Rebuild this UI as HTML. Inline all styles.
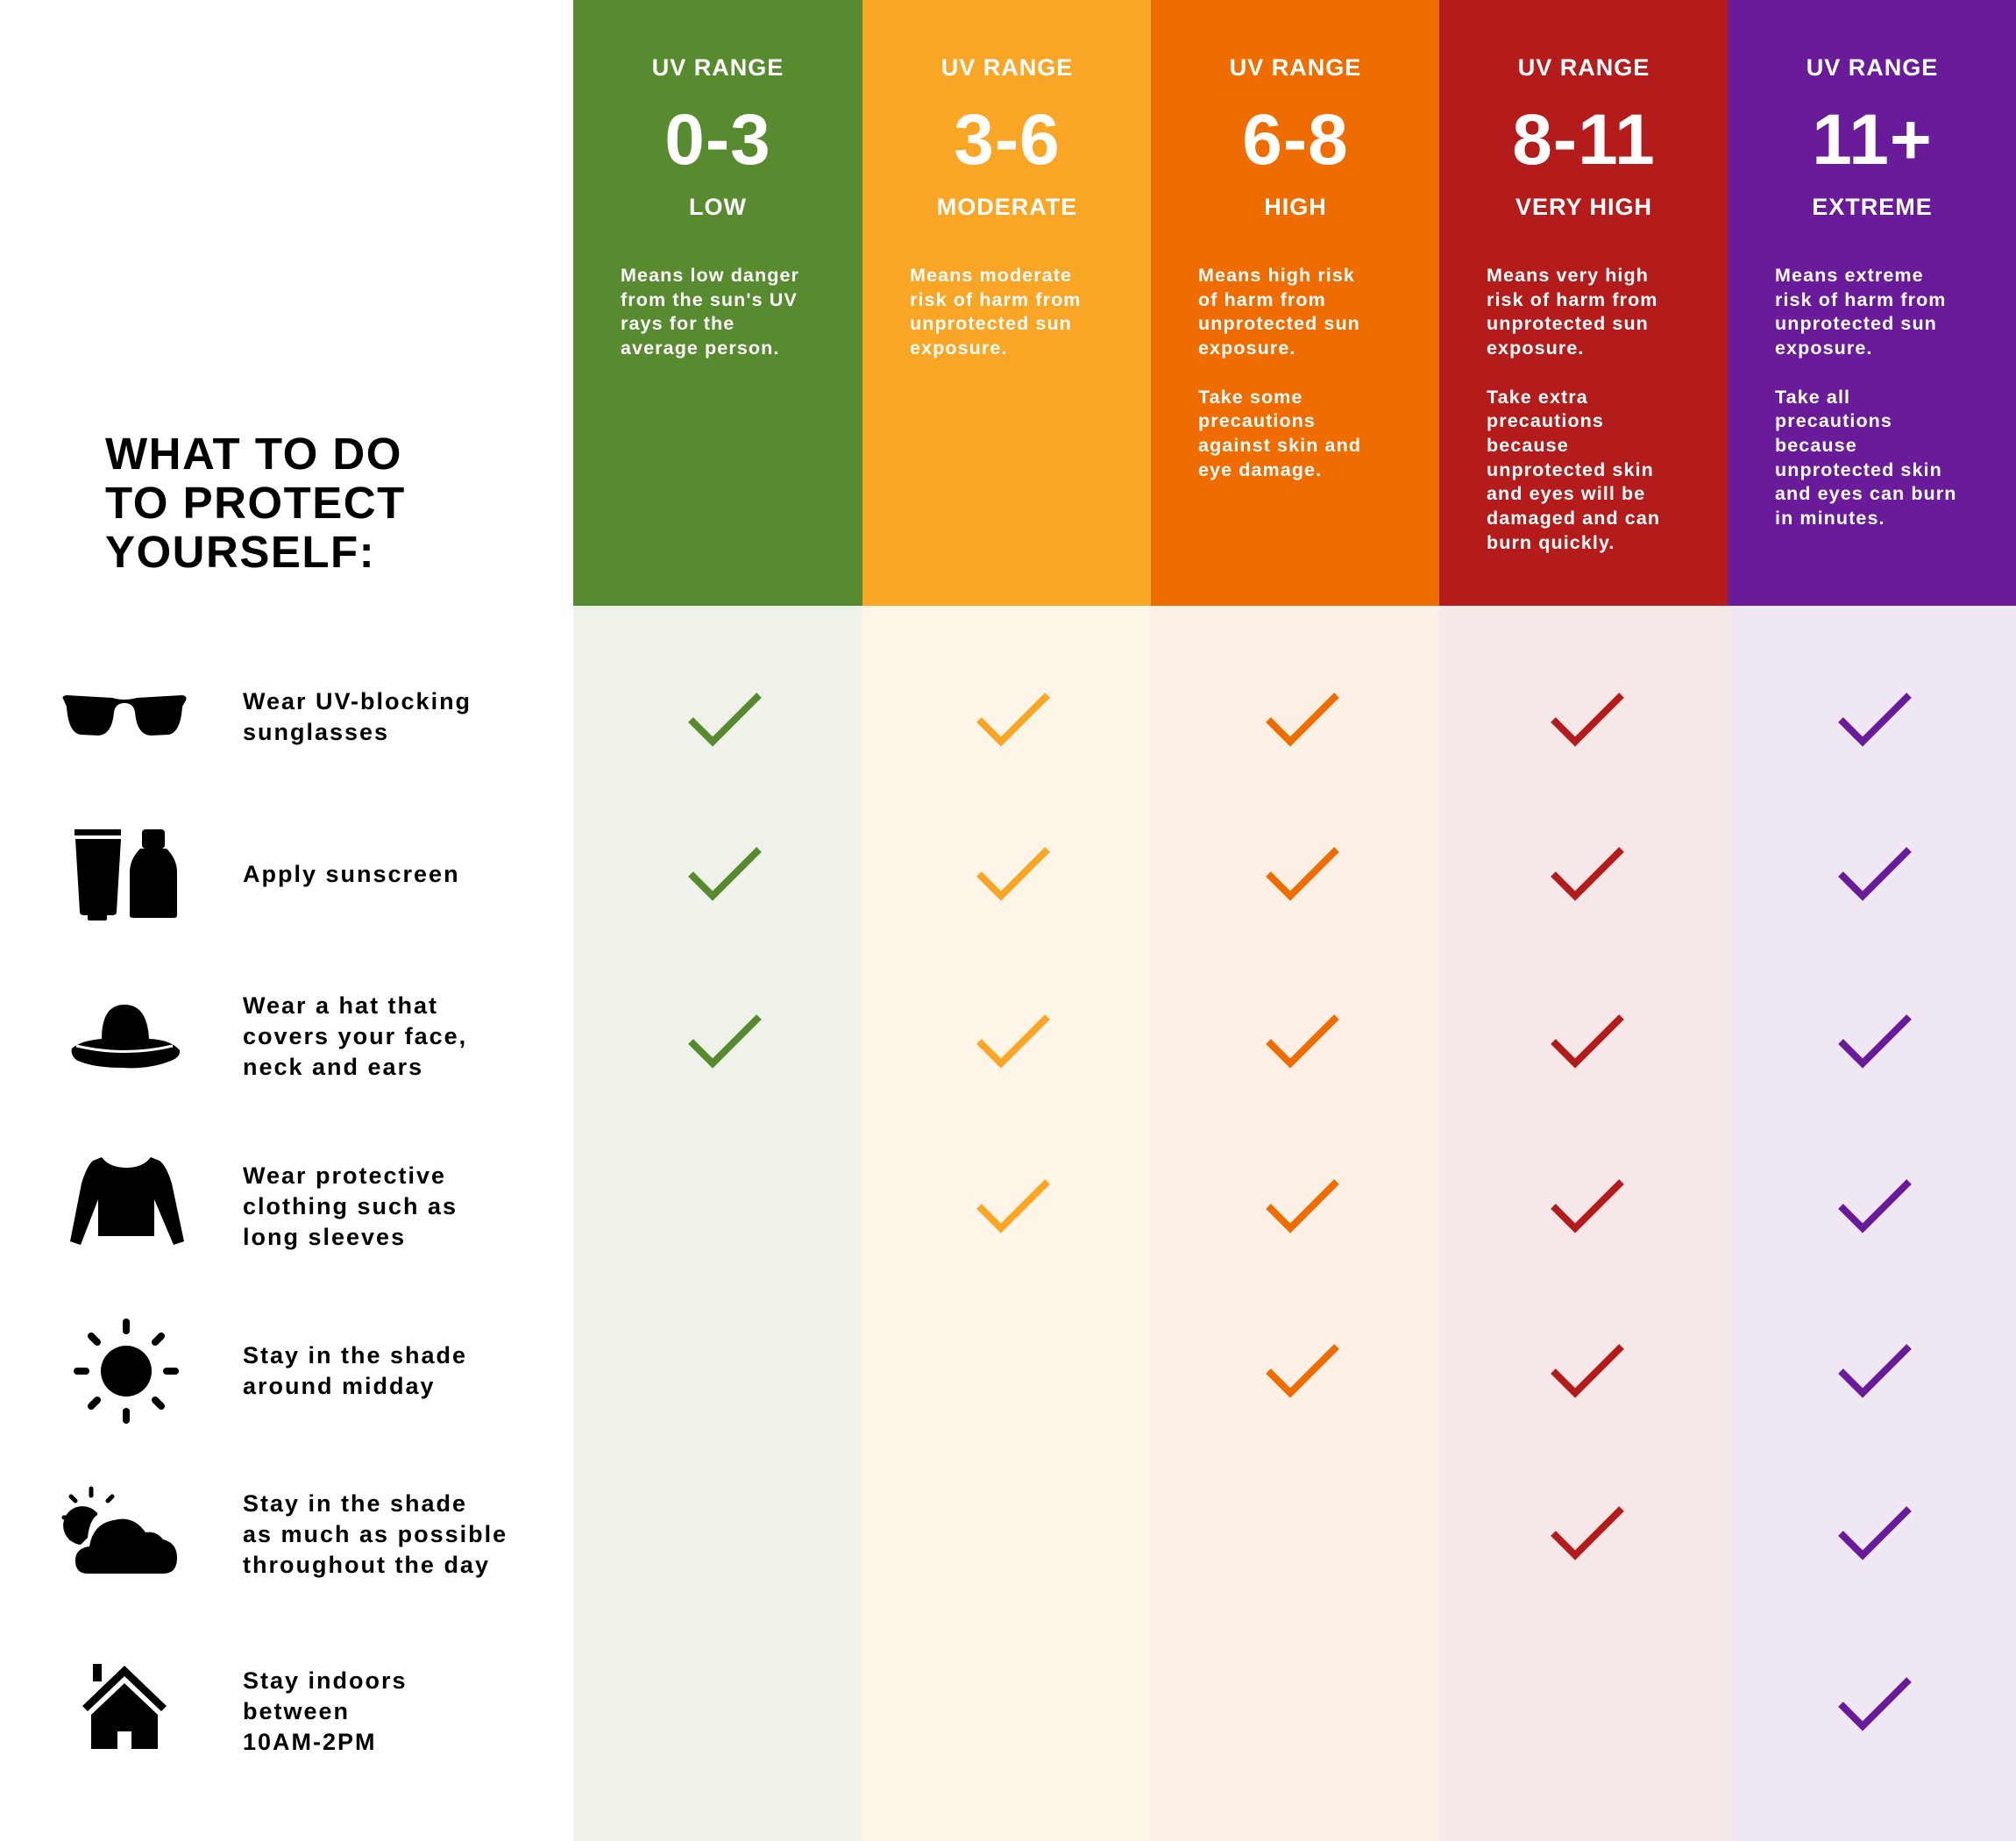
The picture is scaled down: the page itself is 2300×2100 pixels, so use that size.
<!DOCTYPE html>
<html><head><meta charset="utf-8"><style>
*{margin:0;padding:0;box-sizing:border-box}
body{width:2300px;height:2100px;position:relative;background:#fff;font-family:"Liberation Sans",Arial,sans-serif;font-weight:bold;overflow:hidden}
.col{position:absolute;top:0;width:330px;height:2100px}
.hd{position:absolute;left:0;top:0;width:100%;height:691px;color:#fff}
.uv{position:absolute;top:62px;width:100%;text-align:center;font-size:27px;letter-spacing:1px}
.num{position:absolute;top:115px;width:100%;text-align:center;font-size:82px;line-height:90px;letter-spacing:1px}
.lvl{position:absolute;top:221px;width:100%;text-align:center;font-size:27px;letter-spacing:1px}
.ds{position:absolute;top:301px;left:54px;white-space:nowrap;font-size:21.5px;line-height:27.7px;letter-spacing:1.1px}
.title{position:absolute;left:120px;top:490px;font-size:51px;line-height:56px;letter-spacing:1.5px;color:#000}
.lab{position:absolute;left:277px;font-size:27px;line-height:35px;letter-spacing:2px;color:#000}
</style></head><body>
<div class="title">WHAT TO DO<br>TO PROTECT<br>YOURSELF:</div>

<div class="lab" style="top:783px">Wear UV-blocking<br>sunglasses</div>
<div class="lab" style="top:980px">Apply sunscreen</div>
<div class="lab" style="top:1130px">Wear a hat that<br>covers your face,<br>neck and ears</div>
<div class="lab" style="top:1324px">Wear protective<br>clothing such as<br>long sleeves</div>
<div class="lab" style="top:1529px">Stay in the shade<br>around midday</div>
<div class="lab" style="top:1698px">Stay in the shade<br>as much as possible<br>throughout the day</div>
<div class="lab" style="top:1900px">Stay indoors<br>between<br>10AM-2PM</div>

<svg style="position:absolute;left:0;top:0" width="660" height="2100">
<g fill="#000">
<path d="M72 797 Q70 794 76 793 L128 796 Q142 800 156 796 L208 793 Q214 794 212 799 L208 806 Q206 836 192 838 L172 839 Q156 838 154 812 Q152 802 142 802 Q132 802 130 812 Q128 838 112 839 L92 838 Q78 836 76 806 Z"/>
<rect x="85" y="946" width="53" height="7"/>
<path d="M86 957 L138 957 L133 1040 Q133 1044 128 1044 L96 1044 Q91 1044 91 1040 Z"/>
<rect x="100" y="1040" width="22" height="10" rx="2"/>
<rect x="162" y="946" width="26" height="22" rx="4"/>
<path d="M160 968 L190 968 Q202 980 202 995 L202 1044 Q202 1047 198 1047 L152 1047 Q148 1047 148 1044 L148 995 Q148 980 160 968 Z"/>
<path d="M116 1185 Q116 1146 142 1146 Q168 1146 170 1185 Q195 1186 205 1198 Q206 1206 195 1210 Q170 1220 140 1218 Q105 1218 87 1209 Q80 1203 82 1196 Q92 1187 116 1185 Z"/>
<path d="M116 1320 Q125 1332 144 1332 Q163 1332 172 1320 L182 1324 Q190 1330 196 1350 L210 1416 L198 1420 L176 1368 L176 1410 L112 1410 L112 1368 L92 1420 L80 1416 L93 1350 Q99 1330 106 1324 Z"/>
<circle cx="144" cy="1564" r="29"/>
<path d="M100 1795 Q86 1795 86 1780 Q86 1766 102 1764 Q106 1738 130 1734 Q152 1728 166 1748 Q178 1746 186 1756 Q202 1760 202 1777 Q202 1795 186 1795 Z"/>
<path d="M111 1726 A22 22 0 1 0 92 1762 L100 1754 Q102 1734 111 1728 Z"/>
<path d="M142 1900 L190 1946 L184 1952 L142 1912 L100 1952 L94 1946 Z"/>
<rect x="106" y="1898" width="10" height="20"/>
<path d="M142 1920 L180 1956 L180 1995 L150 1995 L150 1975 L134 1975 L134 1995 L104 1995 L104 1956 Z"/>
</g>
<path d="M87 1193 Q142 1206 197 1193" stroke="#fff" stroke-width="3" fill="none"/>
<g stroke="#000" stroke-width="8" stroke-linecap="round">
<line x1="144" y1="1508" x2="144" y2="1518"/><line x1="144" y1="1610" x2="144" y2="1620"/>
<line x1="88" y1="1564" x2="98" y2="1564"/><line x1="190" y1="1564" x2="200" y2="1564"/>
<line x1="104" y1="1524" x2="111" y2="1531"/><line x1="177" y1="1597" x2="184" y2="1604"/>
<line x1="184" y1="1524" x2="177" y2="1531"/><line x1="111" y1="1597" x2="104" y2="1604"/>
<g stroke-width="5">
<line x1="104" y1="1698" x2="104" y2="1706"/><line x1="73" y1="1731" x2="81" y2="1731"/>
<line x1="81" y1="1707" x2="86" y2="1712"/><line x1="128" y1="1707" x2="123" y2="1712"/>
<line x1="81" y1="1755" x2="86" y2="1750"/>
</g></g>
</svg>

<div class="col" style="left:654px;background:#eef2e9">
<div class="hd" style="background:#588a2f">
<div class="uv">UV RANGE</div><div class="num">0-3</div><div class="lvl">LOW</div>
<div class="ds">Means low danger<br>from the sun's UV<br>rays for the<br>average person.</div></div>
</div>
<div class="col" style="left:984px;background:#fdf5e8">
<div class="hd" style="background:#f9a627">
<div class="uv">UV RANGE</div><div class="num">3-6</div><div class="lvl">MODERATE</div>
<div class="ds">Means moderate<br>risk of harm from<br>unprotected sun<br>exposure.</div></div>
</div>
<div class="col" style="left:1313px;background:#fcf0e6">
<div class="hd" style="background:#ef6c00">
<div class="uv">UV RANGE</div><div class="num">6-8</div><div class="lvl">HIGH</div>
<div class="ds">Means high risk<br>of harm from<br>unprotected sun<br>exposure.<br><br>Take some<br>precautions<br>against skin and<br>eye damage.</div></div>
</div>
<div class="col" style="left:1642px;background:#f6e7e8">
<div class="hd" style="background:#b41c1c">
<div class="uv">UV RANGE</div><div class="num">8-11</div><div class="lvl">VERY HIGH</div>
<div class="ds">Means very high<br>risk of harm from<br>unprotected sun<br>exposure.<br><br>Take extra<br>precautions<br>because<br>unprotected skin<br>and eyes will be<br>damaged and can<br>burn quickly.</div></div>
</div>
<div class="col" style="left:1971px;background:#efe8f3">
<div class="hd" style="background:#6a1b9a">
<div class="uv">UV RANGE</div><div class="num">11+</div><div class="lvl">EXTREME</div>
<div class="ds">Means extreme<br>risk of harm from<br>unprotected sun<br>exposure.<br><br>Take all<br>precautions<br>because<br>unprotected skin<br>and eyes can burn<br>in minutes.</div></div>
</div>

<svg style="position:absolute;left:0;top:0" width="2300" height="2100" fill="none" stroke-width="8">
<defs><path id="c" d="M0 30 L25 55 L78 2"/></defs>
<g stroke="#588a2f"><use href="#c" x="788" y="791"/><use href="#c" x="788" y="967"/><use href="#c" x="788" y="1158"/></g>
<g stroke="#f9a627"><use href="#c" x="1117" y="791"/><use href="#c" x="1117" y="967"/><use href="#c" x="1117" y="1158"/><use href="#c" x="1117" y="1346"/></g>
<g stroke="#ef6c00"><use href="#c" x="1447" y="791"/><use href="#c" x="1447" y="967"/><use href="#c" x="1447" y="1158"/><use href="#c" x="1447" y="1346"/><use href="#c" x="1447" y="1534"/></g>
<g stroke="#b41c1c"><use href="#c" x="1772" y="791"/><use href="#c" x="1772" y="967"/><use href="#c" x="1772" y="1158"/><use href="#c" x="1772" y="1346"/><use href="#c" x="1772" y="1534"/><use href="#c" x="1772" y="1719"/></g>
<g stroke="#6a1b9a"><use href="#c" x="2100" y="791"/><use href="#c" x="2100" y="967"/><use href="#c" x="2100" y="1158"/><use href="#c" x="2100" y="1346"/><use href="#c" x="2100" y="1534"/><use href="#c" x="2100" y="1719"/><use href="#c" x="2100" y="1914"/></g>
</svg>
</body></html>
